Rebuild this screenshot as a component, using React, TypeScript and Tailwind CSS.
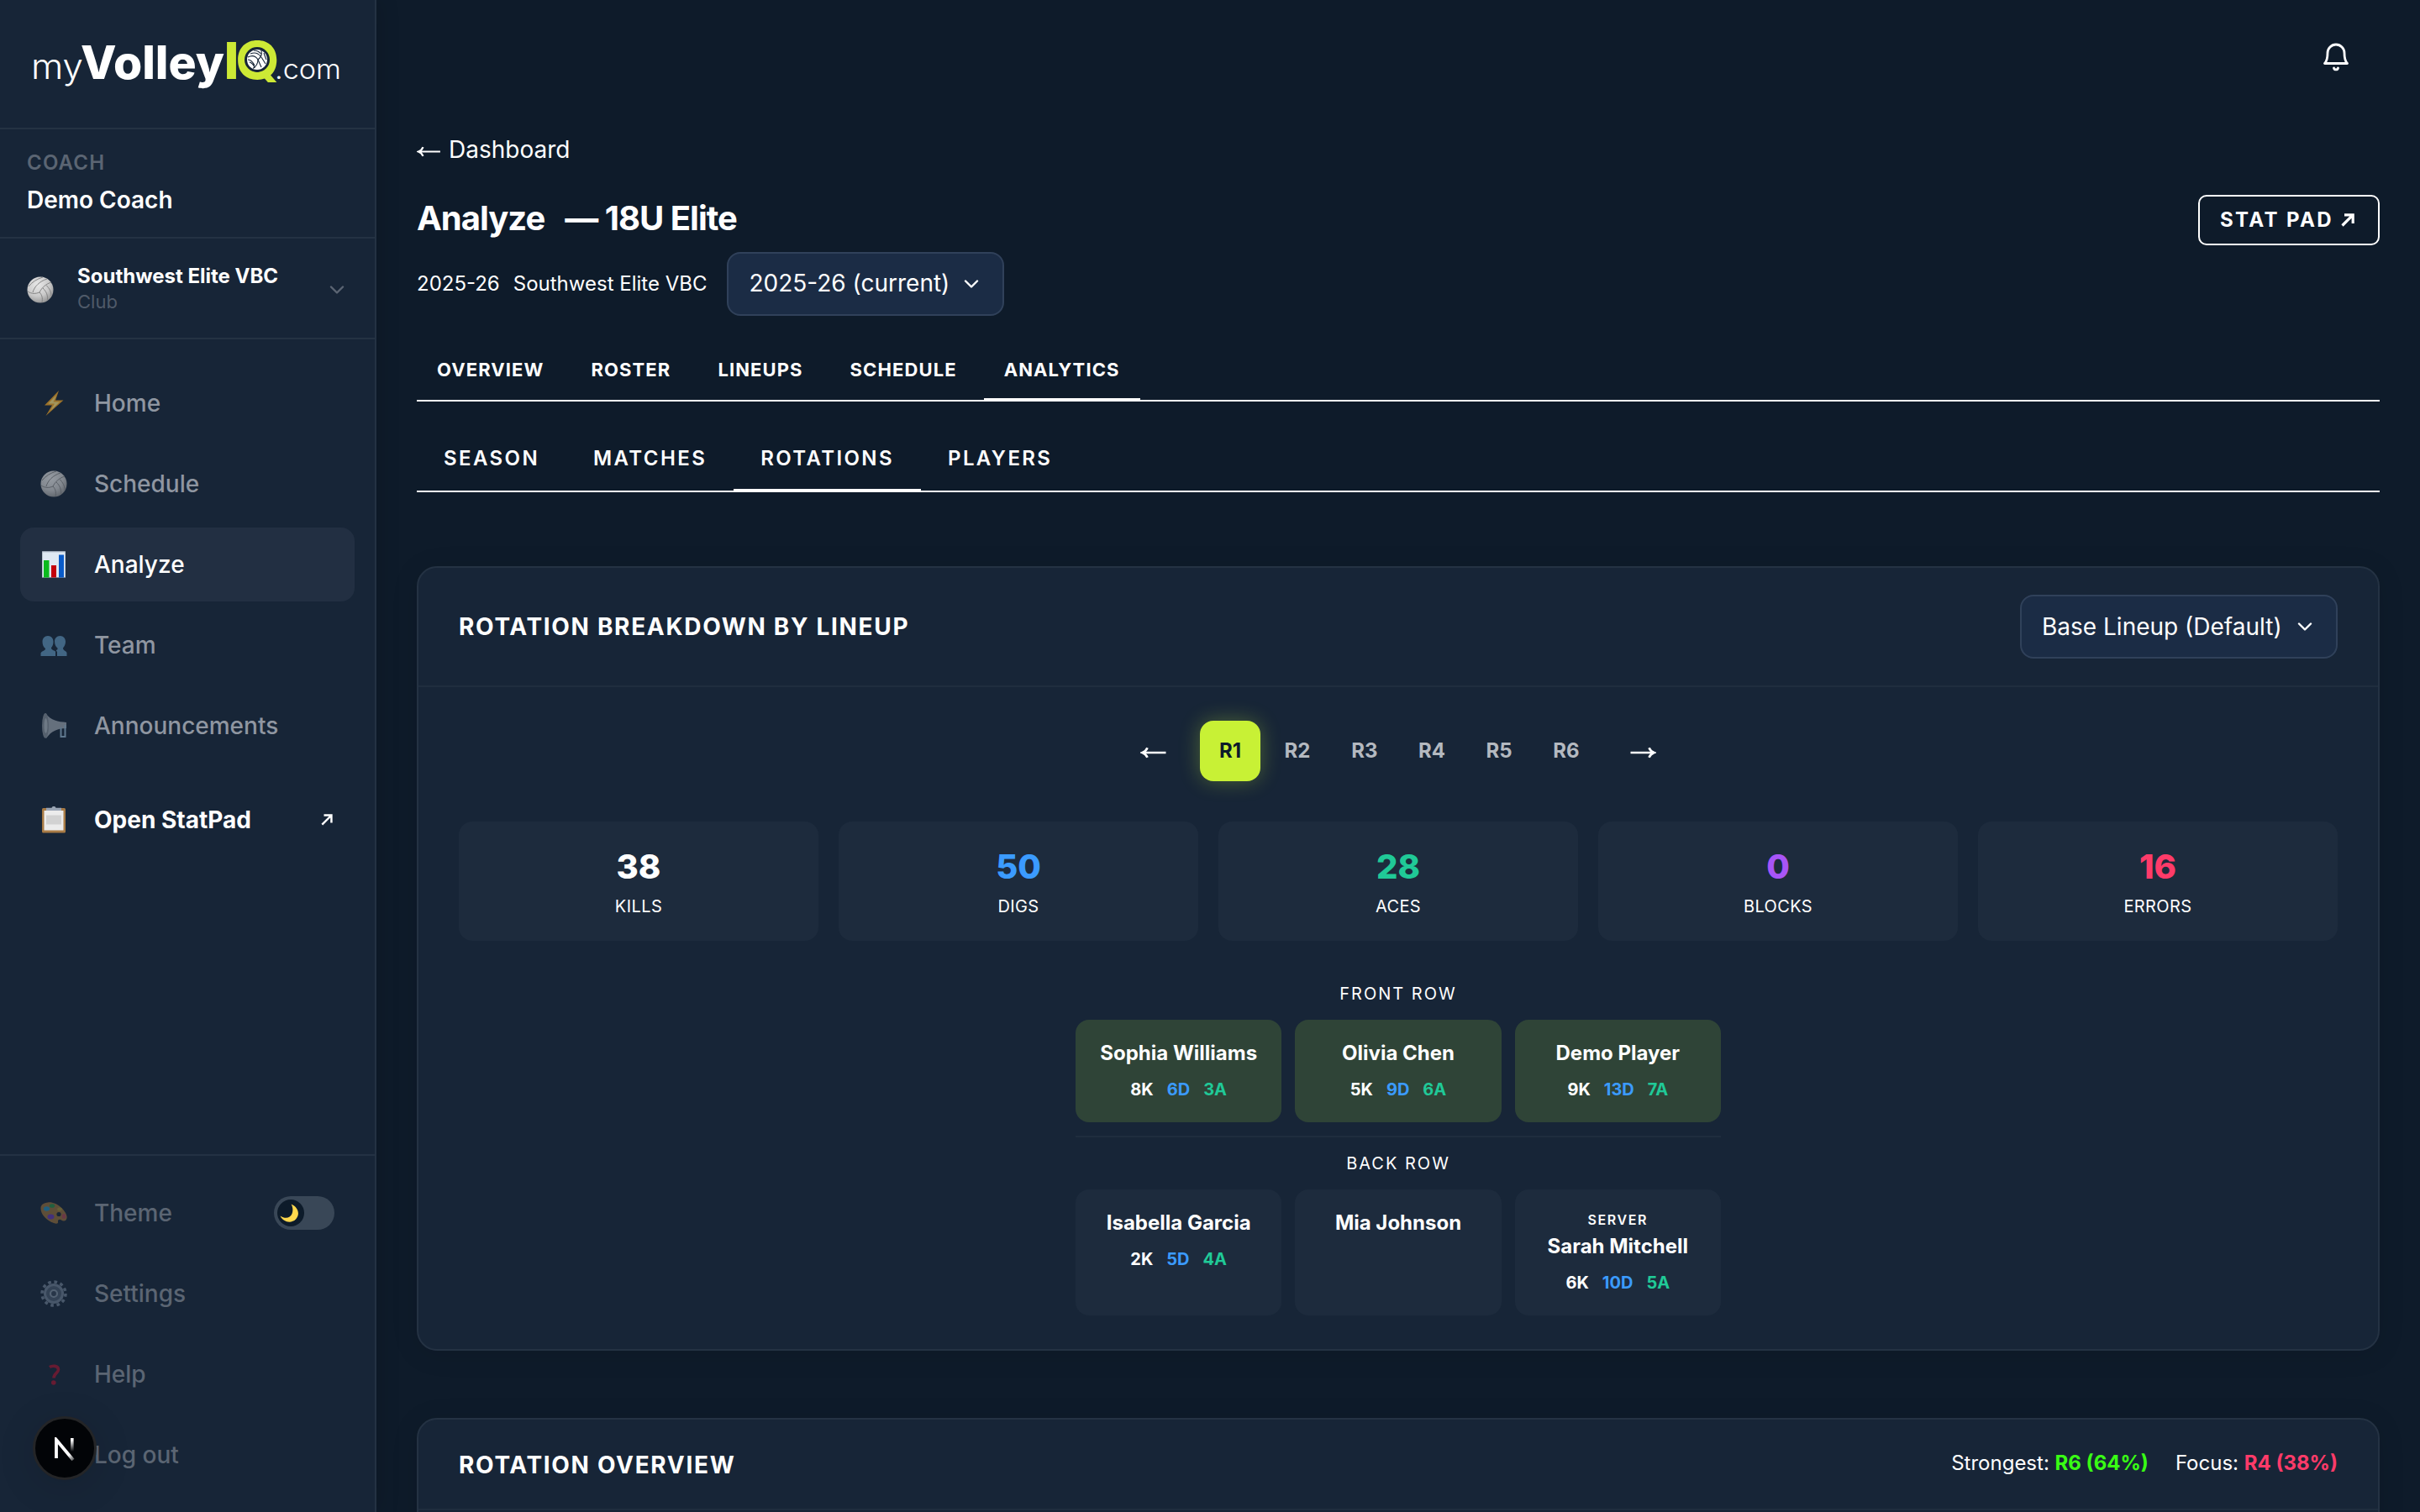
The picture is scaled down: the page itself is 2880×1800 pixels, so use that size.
import type { ReactNode } from 'react'

type NavItem = { label: string; icon: ReactNode; active?: boolean }
type Player = { name: string; k?: number; d?: number; a?: number; server?: boolean }

function Volleyball({ className }: { className?: string }) {
  return (
    <svg viewBox="0 0 32 32" className={className}>
      <defs>
        <radialGradient id="ball" cx="0.4" cy="0.3" r="0.75">
          <stop offset="0" stopColor="#e8e8e8" />
          <stop offset="0.6" stopColor="#c9c9c9" />
          <stop offset="1" stopColor="#8f8f8f" />
        </radialGradient>
      </defs>
      <circle cx="16" cy="16" r="15.5" fill="url(#ball)" />
      <g fill="none" stroke="#858585" strokeWidth="1">
        <path d="M1 18c5 3 9 3 14 1 3-6 8-10 14-12" />
        <path d="M15 19c3 3 4 7 3 12" />
        <path d="M7 19C9 12 15 6 24 3" />
        <path d="M2 12C6 7 12 3 19 1" />
        <path d="M19 14c4 4 6 8 5.500 14M23 10.500c4 4 6 8 6 13" />
      </g>
    </svg>
  )
}

const bolt = (
  <svg viewBox="0 0 32 32" className="size-8">
    <path d="M22 1 5 18.500h9L6.500 31 27.500 12.500h-9.500z" fill="#f5a623" />
    <path d="M19 6.500 9.500 16.500h7.500L12 25l11-10.500h-7.500z" fill="#ffe27a" />
  </svg>
)

const chart = (
  <svg viewBox="0 0 32 32" className="size-8">
    <rect x="2" y="0.500" width="28" height="31" fill="#dfe9f3" />
    <path d="M2.500 31V1h27v30" fill="none" stroke="#b9c4d0" />
    <rect x="4" y="11" width="6.500" height="20.500" fill="#0cb91e" />
    <rect x="13" y="17" width="6" height="14.500" fill="#c4000c" />
    <rect x="22" y="4.500" width="6" height="27" fill="#0a5bc8" />
  </svg>
)

const people = (
  <svg viewBox="0 0 32 32" className="size-8" fill="#5f92b8">
    <path d="M9 5c4 0 6.500 3 6.500 7 0 3-1 5.500-2.500 7 0 3 3 3 5 4.500V29H.5v-3.500C2 22.500 6 23 6 20c-2-1.500-3.500-4-3.500-8C2.500 8 5 5 9 5z" />
    <path d="M23.500 5c4 0 6.500 3 6.500 7 0 3-1.500 6-3 7.500 0 3 3.500 3 4.500 5.500v4H20v-5c-2-1.500-1-2 .5-3v-1.500c-2-1.500-3.500-4-3.500-8C17 8 19.500 5 23.500 5z" />
  </svg>
)

const megaphone = (
  <svg viewBox="0 0 32 32" className="size-8">
    <path d="M6 1c7 9 15 10 25 11v7c-10 0-18 3-24 12z" fill="#9aa3ad" />
    <ellipse cx="6" cy="16" rx="4" ry="15" fill="#7f8892" />
    <ellipse cx="6.500" cy="16" rx="2" ry="9" fill="#a9b1ba" />
    <path d="M24.500 18v11h5V15" fill="none" stroke="#8fb0c8" strokeWidth="2" />
  </svg>
)

const clipboard = (
  <svg viewBox="0 0 32 32" className="size-8">
    <rect x="2" y="2" width="28" height="29.500" rx="1.500" fill="#a87b45" />
    <rect x="4.500" y="5" width="23" height="23.500" fill="#ececec" />
    <rect x="7" y="10.500" width="18" height="11" fill="#d2d2d2" />
    <path d="M7 1.800h6.500a2.600 2.600 0 0 1 5 0H25V5H7z" fill="#9aa5b4" />
  </svg>
)

const palette = (
  <svg viewBox="0 0 32 32" className="size-8">
    <path d="M9 3.500C18 2 30 12 31.500 20c.8 5-3.500 7-6.500 4.500-2-1.500-4.500-.5-4 2 .5 2.500-2 2.800-5 1.500C7 25 0 17 .5 10 .8 6 4 4.200 9 3.500z" fill="#b5803a" />
    <circle cx="22" cy="17.500" r="2.600" fill="#172537" />
    <ellipse cx="7.500" cy="11" rx="3.600" ry="2.800" fill="#2aa5d8" />
    <ellipse cx="14" cy="7.500" rx="3.200" ry="2.300" fill="#2fa84a" />
    <ellipse cx="23" cy="11.500" rx="2.800" ry="2" fill="#c8a735" />
    <ellipse cx="28" cy="20" rx="2.300" ry="3" fill="#d0505a" />
    <ellipse cx="12.500" cy="20.500" rx="4" ry="3" fill="#7a3fd0" />
  </svg>
)

const gear = (
  <svg viewBox="0 0 32 32" className="size-8">
    <circle cx="16" cy="16" r="14" fill="none" stroke="#8595a8" strokeWidth="3.500" strokeDasharray="3.660 3.670" />
    <circle cx="16" cy="16" r="10.500" fill="#56667a" stroke="#8595a8" strokeWidth="3" />
    <circle cx="16" cy="16" r="4" fill="#3b4a5d" stroke="#9dacbd" strokeWidth="2.200" />
  </svg>
)

const question = (
  <svg viewBox="0 0 32 32" className="size-8">
    <path d="M11 7.500c3-2 10.500-2 10.500 3 0 4-5.500 4.500-5.500 10" fill="none" stroke="#c8102e" strokeWidth="3.600" />
    <circle cx="15.800" cy="26" r="2.800" fill="#c8102e" />
  </svg>
)

const door = (
  <svg viewBox="0 0 32 32" className="size-8">
    <rect x="7" y="0" width="18" height="31" fill="#8a5a32" />
  </svg>
)

function Moon() {
  return (
    <svg viewBox="0 0 24 24" className="-ml-1 size-6">
      <path d="M14.500 1.500C23 5 25.500 14 20 19.500 14.500 25 5 23 1.500 15.500c6 4 12 2.500 14-2.500 1.500-4 1-8-1-11.500z" fill="#ffd84d" />
    </svg>
  )
}

function Logo() {
  return (
    <svg viewBox="-8 -20 384 104" className="-ml-2 h-[104px] w-[384px]">
      <g fontFamily="Inter, sans-serif">
        <text x="-3" y="49.500" fontSize="42" fontWeight="300" fill="#fff" textLength="62" lengthAdjust="spacingAndGlyphs">my</text>
        <text x="56" y="49.500" fontSize="55" fontWeight="800" fill="#fff" textLength="171" lengthAdjust="spacingAndGlyphs">Volley</text>
        <text x="226.500" y="49.500" fontSize="60" fontWeight="800" fill="#cde935" textLength="18" lengthAdjust="spacingAndGlyphs">I</text>
        <text x="240.500" y="50" fontSize="62" fontWeight="800" fill="#cde935" textLength="52" lengthAdjust="spacingAndGlyphs">Q</text>
        <text x="287" y="49.500" fontSize="33" fontWeight="300" fill="#fff" textLength="79" lengthAdjust="spacingAndGlyphs">.com</text>
      </g>
      <circle cx="266" cy="27" r="15" fill="#172537" />
      <circle cx="266" cy="27" r="12" fill="#fff" />
      <g fill="none" stroke="#172537" strokeWidth="1.100">
        <path d="M255 24c4-2 9-2 12 3 0 4-2 8-6 10.500" />
        <path d="M267 27c3-2 5-6 4-11M257 30c3 1 5 3 6 7M255 27c3 0 6 3 8 7" />
        <path d="M258 20c5-2 9-1 12 3M262 16c3 0 6 1 8.500 4M267 27l4 9M271 24l5 8M274 19c1 3 2 6 3 8" />
      </g>
    </svg>
  )
}

function ArrowUpRight({ className, strokeWidth = 2.6 }: { className?: string; strokeWidth?: number }) {
  return (
    <svg viewBox="0 0 16 16" className={className} fill="none" stroke="currentColor" strokeWidth={strokeWidth}>
      <path d="M1.500 14.500 14 2M4 1.800h10.200V12" />
    </svg>
  )
}

function LongArrow({ className, strokeWidth = 2.4 }: { className?: string; strokeWidth?: number }) {
  return (
    <svg viewBox="0 0 30 14" className={className} fill="none" stroke="currentColor" strokeWidth={strokeWidth}>
      <path d="M2 7h28M8 1.200C6.800 4 4.800 6 2 7c2.800 1 4.800 3 6 5.800" />
    </svg>
  )
}

function Chevron() {
  return (
    <svg viewBox="0 0 18 10" className="h-2.5 w-[18px]" fill="none" stroke="currentColor" strokeWidth="2.400" strokeLinecap="round" strokeLinejoin="round">
      <path d="M2 1.500 9 8.500l7-7" />
    </svg>
  )
}

const mainNav: NavItem[] = [
  { label: 'Home', icon: bolt },
  { label: 'Schedule', icon: <Volleyball className="size-8" /> },
  { label: 'Analyze', icon: chart, active: true },
  { label: 'Team', icon: people },
  { label: 'Announcements', icon: megaphone },
]

const bottomNav: NavItem[] = [
  { label: 'Theme', icon: palette },
  { label: 'Settings', icon: gear },
  { label: 'Help', icon: question },
  { label: 'Log out', icon: door },
]

const tabs = ['OVERVIEW', 'ROSTER', 'LINEUPS', 'SCHEDULE', 'ANALYTICS']
const subTabs = ['SEASON', 'MATCHES', 'ROTATIONS', 'PLAYERS']
const rotations = ['R1', 'R2', 'R3', 'R4', 'R5', 'R6']

const stats = [
  { value: 38, label: 'KILLS', color: 'text-white' },
  { value: 50, label: 'DIGS', color: 'text-[#3b9bff]' },
  { value: 28, label: 'ACES', color: 'text-[#20c997]' },
  { value: 0, label: 'BLOCKS', color: 'text-[#a855f7]' },
  { value: 16, label: 'ERRORS', color: 'text-[#ff3b69]' },
]

const frontRow: Player[] = [
  { name: 'Sophia Williams', k: 8, d: 6, a: 3 },
  { name: 'Olivia Chen', k: 5, d: 9, a: 6 },
  { name: 'Demo Player', k: 9, d: 13, a: 7 },
]

const backRow: Player[] = [
  { name: 'Isabella Garcia', k: 2, d: 5, a: 4 },
  { name: 'Mia Johnson' },
  { name: 'Sarah Mitchell', k: 6, d: 10, a: 5, server: true },
]

function Sidebar() {
  return (
    <aside className="flex w-[448px] shrink-0 flex-col border-r-2 border-[#243243] bg-[#172537] shadow-[4px_0_24px_rgba(0,0,0,0.12)]">
      <div className="flex h-[154px] items-center border-b-2 border-[#243243] pl-10">
        <Logo />
      </div>
      <div className="border-b-2 border-[#243243] px-8 py-6">
        <div className="text-2xl font-semibold tracking-[0.05em] text-[#5b6573]">COACH</div>
        <div className="mt-2 text-[28px] leading-10 font-semibold">Demo Coach</div>
      </div>
      <div className="flex h-[120px] items-center border-b-2 border-[#243243] pr-9 pl-8">
        <Volleyball className="mt-1 size-8" />
        <div className="ml-7 flex-1">
          <div className="text-2xl leading-[31px] font-bold">Southwest Elite VBC</div>
          <div className="text-[22px] leading-[30px] text-[#4f5a69]">Club</div>
        </div>
        <span className="mt-1 text-[#5b6573]">
          <Chevron />
        </span>
      </div>
      <nav className="flex flex-1 flex-col gap-2 px-6 pt-8">
        {mainNav.map((item) => (
          <a
            key={item.label}
            className={`flex h-[88px] items-center gap-8 rounded-2xl px-6 text-[28px] font-medium ${item.active ? 'bg-[#222f42] text-white' : 'text-[#8f96a1]'}`}
          >
            <span className={item.active ? '' : 'opacity-60'}>{item.icon}</span>
            {item.label}
          </a>
        ))}
        <a className="mt-4 flex h-[88px] items-center gap-8 px-6 text-[28px] font-bold">
          {clipboard}
          <span className="flex-1">Open StatPad</span>
          <ArrowUpRight className="mr-0.5 size-3.5" strokeWidth={2.8} />
        </a>
      </nav>
      <div className="flex flex-col gap-2 border-t-2 border-[#243243] p-6">
        {bottomNav.map((item) => (
          <div key={item.label} className="flex h-[88px] items-center gap-8 px-6 text-[28px] font-medium text-[#5b6573]">
            <span className="opacity-45">{item.icon}</span>
            <span className="flex-1">{item.label}</span>
            {item.label === 'Theme' && (
              <span className="flex h-10 w-[72px] items-center rounded-full bg-[#394757] p-1">
                <span className="flex size-8 items-center justify-center rounded-full bg-[#0d1b2a]">
                  <Moon />
                </span>
              </span>
            )}
          </div>
        ))}
      </div>
    </aside>
  )
}

function Select({ value, className }: { value: string; className: string }) {
  return (
    <button className={`flex h-[76px] items-center justify-between rounded-2xl border-2 border-[#30415a] bg-[#1b2c45] pr-7 pl-6 text-[28px] whitespace-nowrap ${className}`}>
      {value}
      <Chevron />
    </button>
  )
}

function PlayerCard({ player, front }: { player: Player; front?: boolean }) {
  return (
    <div className={`rounded-2xl p-6 text-center ${front ? 'bg-[#2f4437]' : 'bg-[#1d2b3d]'}`}>
      {player.server && <div className="mb-1 text-base leading-6 font-semibold tracking-[0.1em]">SERVER</div>}
      <div className="-mx-6 pt-px text-2xl leading-[30px] font-bold">{player.name}</div>
      {player.k !== undefined && (
        <div className="mt-[13px] flex justify-center gap-4 text-xl leading-[30px] font-bold">
          <span>{player.k}K</span>
          <span className="text-[#3b9bff]">{player.d}D</span>
          <span className="text-[#20c997]">{player.a}A</span>
        </div>
      )}
    </div>
  )
}

export default function App() {
  return (
    <div className="relative flex h-[1800px] w-[2880px] overflow-hidden bg-[#0e1b2a] font-['Inter',sans-serif] text-white">
      <Sidebar />
      <main className="flex-1 px-12">
        <div className="flex h-[136px] items-center justify-end pr-8">
          <svg viewBox="0 0 40 40" className="size-10" fill="none" stroke="currentColor" strokeWidth="2.800" strokeLinecap="round" strokeLinejoin="round">
            <path d="M6.500 27.500h27c-3-3-3.500-7-3.500-12.500a10 10 0 0 0-20 0c0 5.500-.5 9.500-3.500 12.500z" />
            <path d="M17.500 33a2.600 2.600 0 0 0 5 0" />
          </svg>
        </div>
        <a className="mt-[22px] flex items-center gap-2.5 text-[28px] leading-10">
          <LongArrow className="mt-1 h-[13px] w-7" />
          Dashboard
        </a>
        <div className="mt-[34px] flex items-start justify-between">
          <div className="pt-1">
            <h1 className="flex gap-6 text-[40px] leading-[48px] font-bold tracking-tight">
              <span>Analyze</span>
              <span>— 18U Elite</span>
            </h1>
            <div className="mt-4 flex items-center text-2xl">
              <span>2025-26</span>
              <span className="mr-6 ml-4">Southwest Elite VBC</span>
              <Select value="2025-26 (current)" className="w-[330px]" />
            </div>
          </div>
          <a className="flex h-[60px] items-center gap-[9px] rounded-[10px] border-2 border-white pr-7 pl-6 text-2xl font-bold tracking-[0.1em]">
            STAT PAD
            <ArrowUpRight className="size-4" strokeWidth={3.2} />
          </a>
        </div>

        <div className="mt-7 flex gap-2 border-b-2 border-white">
          {tabs.map((t) => (
            <div
              key={t}
              className={`-mb-0.5 flex h-[74px] items-center border-b-4 px-6 pt-0.5 text-[22px] font-bold tracking-[0.05em] ${t === 'ANALYTICS' ? 'border-white' : 'border-transparent'}`}
            >
              {t}
            </div>
          ))}
        </div>
        <div className="mt-[30px] flex border-b-2 border-white">
          {subTabs.map((t) => (
            <div
              key={t}
              className={`-mb-0.5 flex h-[78px] items-center border-b-4 px-8 pt-0.5 text-2xl font-semibold tracking-[0.1em] ${t === 'ROTATIONS' ? 'border-white' : 'border-transparent'}`}
            >
              {t}
            </div>
          ))}
        </div>

        <section className="mt-[88px] rounded-3xl border-2 border-[#243243] bg-[#172537] shadow-[0_4px_32px_rgba(0,0,0,0.1)]">
          <div className="flex items-center justify-between border-b-2 border-[#1f2d3e] px-12 py-8">
            <h2 className="text-[28px] font-bold tracking-[0.06em]">ROTATION BREAKDOWN BY LINEUP</h2>
            <Select value="Base Lineup (Default)" className="w-[378px]" />
          </div>
          <div className="px-12 py-10">
            <div className="flex items-center justify-center">
              <button className="mr-10 pt-1">
                <LongArrow className="h-3.5 w-[31px]" strokeWidth={2.7} />
              </button>
              <div className="flex gap-2">
                {rotations.map((r, i) => (
                  <button
                    key={r}
                    className={`size-[72px] rounded-2xl text-2xl font-bold ${i === 0 ? 'bg-[#c8f135] text-[#0d1b2a] shadow-[0_0_24px_rgba(200,241,53,0.3)]' : 'text-[#b4b9c0]'}`}
                  >
                    {r}
                  </button>
                ))}
              </div>
              <button className="ml-10 pt-1">
                <LongArrow className="h-3.5 w-[31px] rotate-180" strokeWidth={2.7} />
              </button>
            </div>

            <div className="mt-12 grid grid-cols-5 gap-6">
              {stats.map((s) => (
                <div key={s.label} className="h-[142px] rounded-2xl bg-[#1d2b3d] pt-6 text-center">
                  <div className={`text-[40px] leading-[60px] font-extrabold ${s.color}`}>{s.value}</div>
                  <div className="mt-0.5 text-xl leading-[30px] tracking-[0.02em]">{s.label}</div>
                </div>
              ))}
            </div>

            <div className="mx-auto mt-12 w-[768px]">
              <div className="text-center text-xl leading-[30px] tracking-[0.1em]">FRONT ROW</div>
              <div className="mt-4 grid grid-cols-3 gap-4">
                {frontRow.map((p) => (
                  <PlayerCard key={p.name} player={p} front />
                ))}
              </div>
              <div className="mt-4 border-t-2 border-[#1f2d3e] pt-4 text-center text-xl leading-[30px] tracking-[0.1em]">BACK ROW</div>
              <div className="mt-4 grid grid-cols-3 gap-4">
                {backRow.map((p) => (
                  <PlayerCard key={p.name} player={p} />
                ))}
              </div>
            </div>
          </div>
        </section>

        <section className="mt-20 h-[400px] rounded-3xl border-2 border-[#243243] bg-[#172537] shadow-[0_4px_32px_rgba(0,0,0,0.1)]">
          <div className="flex h-[108px] items-center justify-between border-b-2 border-[#1f2d3e] px-12">
            <h2 className="pt-px text-[28px] font-bold tracking-[0.06em]">ROTATION OVERVIEW</h2>
            <div className="mb-[3px] flex gap-8 text-2xl">
              <span>
                Strongest: <b className="font-bold text-[#39ff14]">R6 (64%)</b>
              </span>
              <span>
                Focus: <b className="font-bold text-[#ff3b69]">R4 (38%)</b>
              </span>
            </div>
          </div>
        </section>
      </main>

      {/* dev tools badge floats over the sidebar */}
      <div className="absolute top-[1686px] left-[39px] flex size-[76px] items-center justify-center rounded-full border-[3px] border-[#242527] bg-[#020407] shadow-[0_8px_48px_rgba(0,0,0,0.12)]">
        <svg viewBox="0 0 26 30" className="mt-1 h-[30px] w-[26px]">
          <defs>
            <linearGradient id="fadeDiagonal" x1="0" y1="0" x2="26" y2="30" gradientUnits="userSpaceOnUse">
              <stop offset="0.700" stopColor="#fff" />
              <stop offset="1" stopColor="#fff" stopOpacity="0" />
            </linearGradient>
            <linearGradient id="fadeStem" x1="0" y1="0" x2="0" y2="17" gradientUnits="userSpaceOnUse">
              <stop offset="0.200" stopColor="#fff" />
              <stop offset="1" stopColor="#fff" stopOpacity="0" />
            </linearGradient>
          </defs>
          <path d="M3 25V3l20 24" fill="none" stroke="url(#fadeDiagonal)" strokeWidth="3.800" />
          <rect x="20" y="1" width="3.600" height="16" fill="url(#fadeStem)" />
        </svg>
      </div>
    </div>
  )
}
